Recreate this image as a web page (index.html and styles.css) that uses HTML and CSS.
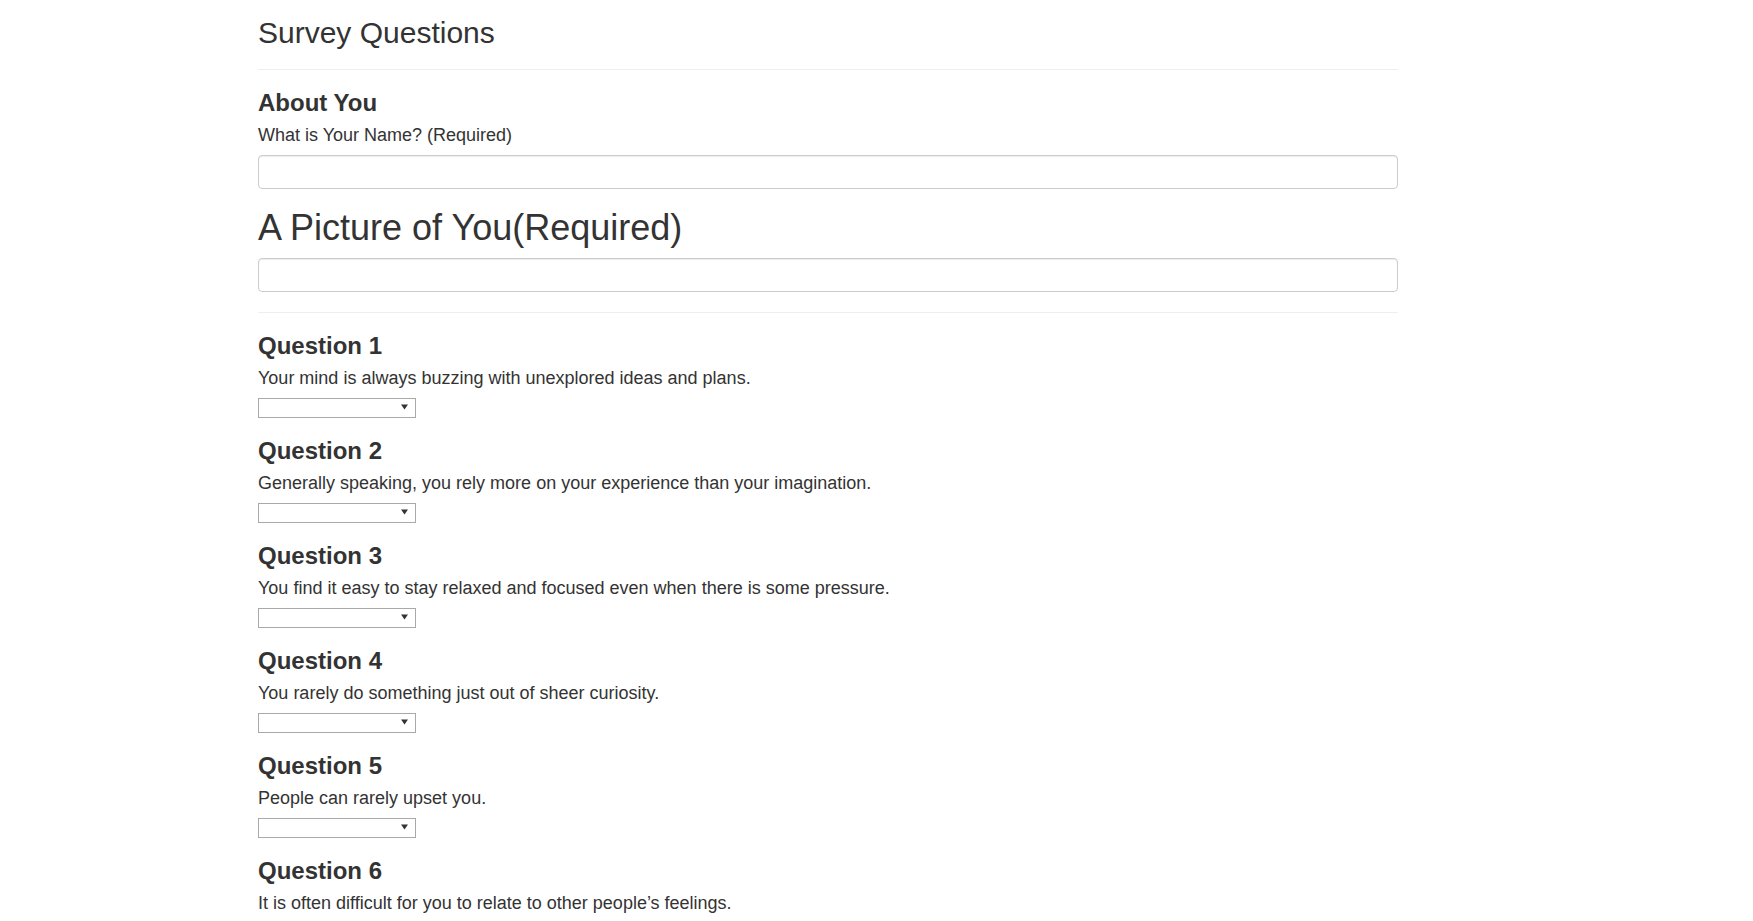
FILE: index.html
```html
<!DOCTYPE html>
<html lang="en">
<head>
<meta charset="utf-8">
<title>Survey Questions</title>
<link rel="stylesheet" href="styles.css">
</head>
<body>
<div class="container">
  <h2 class="page-title">Survey Questions</h2>
  <hr class="rule">
  <form class="survey">
    <section class="group">
      <h3 class="q-title">About You</h3>
      <label class="q-text" for="name">What is Your Name? (Required)</label>
      <input class="form-control" id="name" type="text">
    </section>
    <h1 class="big-title">A Picture of You(Required)</h1>
    <input class="form-control" id="photo" type="text">
    <hr class="rule">

    <section class="question">
      <h3 class="q-title">Question 1</h3>
      <p class="q-text">Your mind is always buzzing with unexplored ideas and plans.</p>
      <div class="select-wrap"><select class="answer"></select><svg class="caret" width="7" height="6" viewBox="0 0 7 6"><path d="M0 0.5H7L3.5 5.5Z" fill="#333"/></svg></div>
    </section>
    <section class="question">
      <h3 class="q-title">Question 2</h3>
      <p class="q-text">Generally speaking, you rely more on your experience than your imagination.</p>
      <div class="select-wrap"><select class="answer"></select><svg class="caret" width="7" height="6" viewBox="0 0 7 6"><path d="M0 0.5H7L3.5 5.5Z" fill="#333"/></svg></div>
    </section>
    <section class="question">
      <h3 class="q-title">Question 3</h3>
      <p class="q-text">You find it easy to stay relaxed and focused even when there is some pressure.</p>
      <div class="select-wrap"><select class="answer"></select><svg class="caret" width="7" height="6" viewBox="0 0 7 6"><path d="M0 0.5H7L3.5 5.5Z" fill="#333"/></svg></div>
    </section>
    <section class="question">
      <h3 class="q-title">Question 4</h3>
      <p class="q-text">You rarely do something just out of sheer curiosity.</p>
      <div class="select-wrap"><select class="answer"></select><svg class="caret" width="7" height="6" viewBox="0 0 7 6"><path d="M0 0.5H7L3.5 5.5Z" fill="#333"/></svg></div>
    </section>
    <section class="question">
      <h3 class="q-title">Question 5</h3>
      <p class="q-text">People can rarely upset you.</p>
      <div class="select-wrap"><select class="answer"></select><svg class="caret" width="7" height="6" viewBox="0 0 7 6"><path d="M0 0.5H7L3.5 5.5Z" fill="#333"/></svg></div>
    </section>
    <section class="question">
      <h3 class="q-title">Question 6</h3>
      <p class="q-text">It is often difficult for you to relate to other people’s feelings.</p>
      <div class="select-wrap"><select class="answer"></select><svg class="caret" width="7" height="6" viewBox="0 0 7 6"><path d="M0 0.5H7L3.5 5.5Z" fill="#333"/></svg></div>
    </section>
  </form>
</div>
</body>
</html>
```

FILE: styles.css
```css
html, body {
  margin: 0;
  padding: 0;
  background: #fff;
}
body {
  font-family: "Liberation Sans", Arial, sans-serif;
  color: #333;
  font-size: 18px;
  line-height: 1.42857;
}
.container {
  width: 1140px;
  margin-left: 258px;
  padding-top: 16px;
  padding-bottom: 40px;
}
.page-title {
  font-size: 30px;
  font-weight: normal;
  line-height: 33px;
  margin: 0;
}
.rule {
  border: 0;
  border-top: 1px solid #eee;
  margin: 20px 0;
  height: 0;
}
.survey {
  display: flex;
  flex-direction: column;
}
.group, .question {
  display: flex;
  flex-direction: column;
  align-items: flex-start;
}
.question + .question {
  margin-top: 19.5px;
}
.q-title {
  font-size: 24px;
  font-weight: bold;
  line-height: 26.4px;
  margin: 0 0 6px;
}
.q-text {
  display: block;
  font-size: 18px;
  line-height: 26px;
  margin: 0 0 7px;
  font-weight: normal;
}
.form-control {
  box-sizing: border-box;
  display: block;
  width: 100%;
  height: 34px;
  padding: 6px 12px;
  font: inherit;
  font-size: 14px;
  color: #555;
  background: #fff;
  border: 1px solid #ccc;
  border-radius: 4px;
  box-shadow: inset 0 1px 1px rgba(0,0,0,.075);
  margin: 0;
}
.big-title {
  font-size: 36px;
  font-weight: normal;
  line-height: 39.6px;
  margin: 19px 0 10px;
}
.select-wrap {
  position: relative;
  width: 158px;
  height: 20px;
}
.answer {
  -webkit-appearance: none;
  appearance: none;
  display: block;
  box-sizing: border-box;
  width: 158px;
  height: 20px;
  margin: 0;
  padding: 0 4px;
  border: 1px solid #a9a9a9;
  border-radius: 0;
  background: #fff;
  font: inherit;
  font-size: 13px;
}
.caret {
  position: absolute;
  right: 8px;
  top: 6px;
  pointer-events: none;
}
```
